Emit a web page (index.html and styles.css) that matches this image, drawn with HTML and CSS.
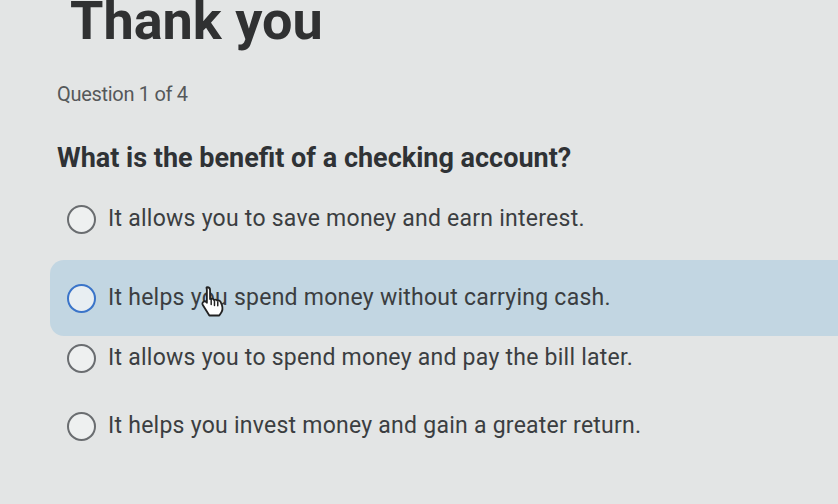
FILE: index.html
```html
<!DOCTYPE html>
<html>
<head>
<meta charset="utf-8">
<link rel="stylesheet" href="styles.css">
</head>
<body>
<div class="page">
  <h1 class="title">Thank you</h1>
  <div class="counter">Question 1 of 4</div>
  <div class="question">What is the benefit of a checking account?</div>
  <div class="options">
    <div class="option first"><span class="radio"></span><span class="label">It allows you to save money and earn interest.</span></div>
    <div class="option hover"><span class="radio"></span><span class="label">It helps you spend money without carrying cash.</span>
      <svg class="cursor" width="30" height="34" viewBox="0 0 26 30"><path d="M8 2c1.4 0 2.4 1 2.4 2.4v8l1-.3c1.2-.3 2.2.3 2.6 1.2 1-.6 2.3-.3 2.9.6 1-.5 2.3 0 2.8 1l1.2 3c.8 2.4.5 5-1 7l-1.4 2H9.8L4 17.6c-.7-1-.4-2.3.6-2.9.9-.5 2-.3 2.6.5l.4.5V4.4C7.6 3 6.6 2 8 2z" fill="#fff" stroke="#222" stroke-width="1.6" stroke-linejoin="round"/><path d="M11.4 12.6v4.6M14.3 14v4M17.2 15v3.4" stroke="#222" stroke-width="1.3" stroke-linecap="round"/></svg>
    </div>
    <div class="option third"><span class="radio"></span><span class="label">It allows you to spend money and pay the bill later.</span></div>
    <div class="option"><span class="radio"></span><span class="label">It helps you invest money and gain a greater return.</span></div>
  </div>
</div>
</body>
</html>
```
FILE: styles.css
```css
html, body {
  margin: 0;
  padding: 0;
  background: #e3e5e5;
  overflow: hidden;
}
.page {
  width: 838px;
  height: 504px;
  font-family: Roboto, "Liberation Sans", sans-serif;
  color: #3b3e41;
}
.title {
  margin: -8px 0 0 70px;
  font-size: 54px;
  line-height: 58px;
  font-weight: 700;
  color: #303132;
}
.counter {
  margin: 32px 0 0 57px;
  font-size: 20px;
  line-height: 24px;
  color: #55585a;
  letter-spacing: -0.3px;
}
.question {
  margin: 36px 0 0 57px;
  font-size: 27px;
  line-height: 32px;
  font-weight: 700;
  color: #2f3235;
}
.options {
  margin-top: 25px;
  display: flex;
  flex-direction: column;
}
.option {
  position: relative;
  display: flex;
  align-items: center;
  gap: 12px;
  height: 44px;
  padding-left: 67px;
}
.option.first {
  height: 40px;
  margin-bottom: 21px;
}
.option.hover {
  height: 76px;
  margin-left: 50px;
  padding-left: 17px;
  background: #c2d6e2;
  border-radius: 14px 0 0 14px;
}
.option.third {
  margin-bottom: 24px;
}
.radio {
  width: 25px;
  height: 25px;
  border: 2px solid #6a6d70;
  border-radius: 50%;
  background: #eef0f0;
  flex: none;
}
.hover .radio {
  border-color: #3a74c9;
  background: #e8eef2;
}
.label {
  font-size: 23px;
  line-height: 28px;
  color: #3b3e41;
  letter-spacing: 0.25px;
}
.cursor {
  position: absolute;
  left: 148px;
  top: 25px;
}
```
